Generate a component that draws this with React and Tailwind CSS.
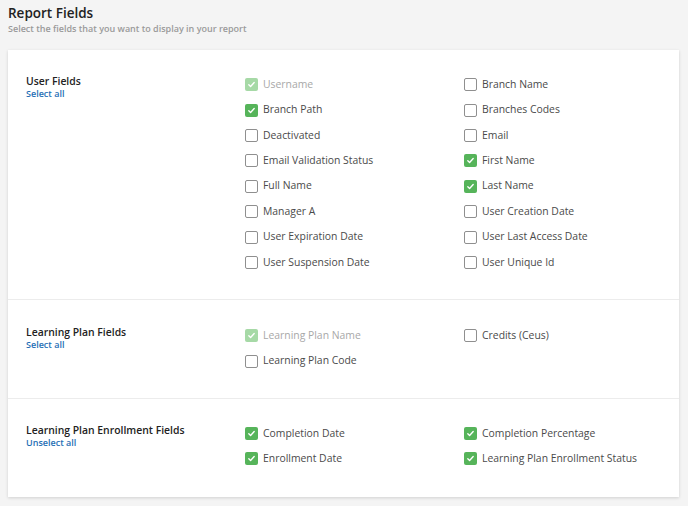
import React from "react";

const sections = [
  {
    title: "User Fields",
    action: "Select all",
    cols: [
      [
        { label: "Username", checked: true, disabled: true },
        { label: "Branch Path", checked: true },
        { label: "Deactivated" },
        { label: "Email Validation Status" },
        { label: "Full Name" },
        { label: "Manager A" },
        { label: "User Expiration Date" },
        { label: "User Suspension Date" },
      ],
      [
        { label: "Branch Name" },
        { label: "Branches Codes" },
        { label: "Email" },
        { label: "First Name", checked: true },
        { label: "Last Name", checked: true },
        { label: "User Creation Date" },
        { label: "User Last Access Date" },
        { label: "User Unique Id" },
      ],
    ],
  },
  {
    title: "Learning Plan Fields",
    action: "Select all",
    cols: [
      [
        { label: "Learning Plan Name", checked: true, disabled: true },
        { label: "Learning Plan Code" },
      ],
      [{ label: "Credits (Ceus)" }],
    ],
  },
  {
    title: "Learning Plan Enrollment Fields",
    action: "Unselect all",
    cols: [
      [
        { label: "Completion Date", checked: true },
        { label: "Enrollment Date", checked: true },
      ],
      [
        { label: "Completion Percentage", checked: true },
        { label: "Learning Plan Enrollment Status", checked: true },
      ],
    ],
  },
];

// padding per section, tuned to the screenshot
const pads = ["pt-[22px] pb-[24px]", "border-t border-[#ececec] pt-[23px] pb-[24px]", "border-t border-[#ececec] pt-[22px] pb-[25px]"];

function Checkbox({ checked, disabled }) {
  if (checked) {
    return (
      <span
        className={
          "flex h-[13px] w-[13px] shrink-0 items-center justify-center rounded-[2px] " +
          (disabled ? "bg-[#a6d9a6]" : "bg-[#56b45a]")
        }
      >
        <svg width="9" height="9" viewBox="0 0 10 10" fill="none">
          <path d="M2 5.2l2 2 4-4.4" stroke="white" strokeWidth="1.5" strokeLinecap="round" strokeLinejoin="round" />
        </svg>
      </span>
    );
  }
  return <span className="h-[13px] w-[13px] shrink-0 rounded-[2px] border-[1.5px] border-[#8f8f8f] bg-white" />;
}

function Field({ label, checked, disabled }) {
  return (
    <div className="flex h-[25.4px] items-center">
      <Checkbox checked={checked} disabled={disabled} />
      <span className={"ml-[5px] text-[10.4px] " + (disabled ? "text-[#a8a8a8]" : "text-[#4a4a4a]")}>{label}</span>
    </div>
  );
}

export default function App() {
  return (
    <div className="min-h-[506px] bg-[#f4f4f4] px-2 pt-[3px] font-['Open_Sans',sans-serif]">
      <h1 className="text-[13.5px] font-semibold leading-[20px] text-[#222]">Report Fields</h1>
      <p className="text-[9px] font-semibold leading-[12px] text-[#9a9a9a]">
        Select the fields that you want to display in your report
      </p>
      <div className="mt-[15px] w-[671px] bg-white shadow-[0_1px_3px_rgba(0,0,0,0.15)]">
        {sections.map((s, i) => (
          <div key={s.title} className={"flex pl-[18px] " + pads[i]}>
            <div className="w-[219px] shrink-0 pt-[2px]">
              <div className="text-[10.4px] font-semibold leading-[14px] text-[#222]">{s.title}</div>
              <div className="text-[9px] font-semibold leading-[11px] text-[#1f6fb5]">{s.action}</div>
            </div>
            {s.cols.map((col, ci) => (
              <div key={ci} className="w-[219px] shrink-0">
                {col.map((f) => (
                  <Field key={f.label} {...f} />
                ))}
              </div>
            ))}
          </div>
        ))}
      </div>
    </div>
  );
}
